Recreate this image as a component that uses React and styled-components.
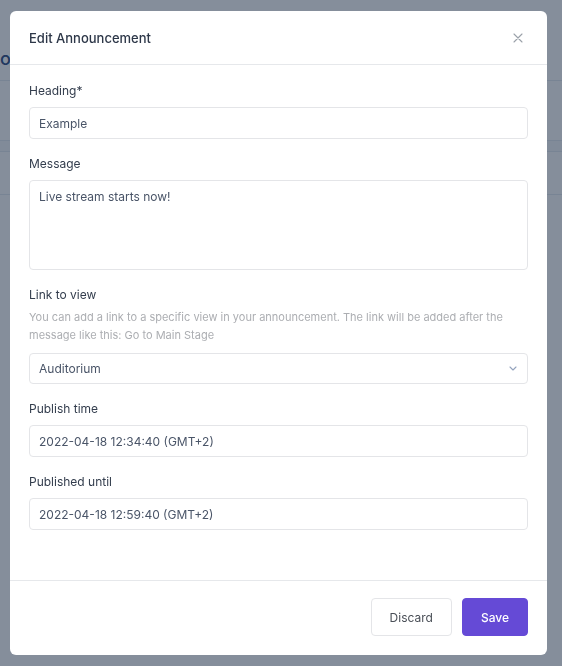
import React from "react";
import styled, { createGlobalStyle } from "styled-components";

const GlobalStyle = createGlobalStyle`
  html, body {
    margin: 0;
    padding: 0;
    background: #ffffff;
    font-family: Inter, "Noto Sans", sans-serif;
    overflow: hidden;
  }
  * {
    box-sizing: border-box;
  }
`;

// page behind the dialog, mostly hidden by the backdrop
const Page = styled.div`
  width: 562px;
  height: 666px;
  background: #ffffff;
`;

const PageHeader = styled.div`
  height: 81px;
  display: flex;
  align-items: flex-end;
  padding-bottom: 11px;
  border-bottom: 1px solid #e2e8f0;
  font-size: 18px;
  font-weight: 500;
  color: #21407a;
  white-space: nowrap;
`;

const PageRow = styled.div`
  height: ${(p) => p.h}px;
  border-bottom: 1px solid #e2e8f0;
  background: ${(p) => (p.shade ? "#f7f9fb" : "#ffffff")};
`;

const Backdrop = styled.div`
  position: fixed;
  inset: 0;
  background: rgba(33, 50, 73, 0.55);
  display: flex;
  align-items: flex-start;
  padding: 11px 15px 11px 10px;
`;

const Dialog = styled.div`
  width: 537px;
  height: 644px;
  background: #ffffff;
  border-radius: 6px;
  display: flex;
  flex-direction: column;
  overflow: hidden;
`;

const Header = styled.div`
  height: 54px;
  flex-shrink: 0;
  display: flex;
  align-items: center;
  justify-content: space-between;
  padding: 0 19px;
  border-bottom: 1px solid #e6e8eb;
`;

const Title = styled.h2`
  margin: 0;
  font-size: 13px;
  font-weight: 500;
  color: #2d3748;
`;

const CloseButton = styled.button`
  width: 20px;
  height: 20px;
  padding: 0;
  border: none;
  background: none;
  display: flex;
  align-items: center;
  justify-content: center;
  cursor: pointer;
`;

const Body = styled.div`
  flex: 1;
  display: flex;
  flex-direction: column;
  gap: 15px;
  padding: 16px 19px 0;
`;

const Field = styled.div`
  display: flex;
  flex-direction: column;
`;

const Label = styled.label`
  font-size: 12px;
  line-height: 20px;
  color: #333d4d;
  margin-bottom: ${(p) => (p.tight ? 3 : 6)}px;
`;

const Help = styled.p`
  margin: 0 0 9px;
  font-size: 11px;
  line-height: 18px;
  color: #acaeb2;
`;

const Input = styled.input`
  height: 32px;
  padding: 0 9px;
  border: 1px solid #e4e5e8;
  border-radius: 4px;
  font-family: inherit;
  font-size: 12px;
  color: #4a5568;
  outline: none;
`;

const TextArea = styled.textarea`
  height: 90px;
  padding: 7px 9px;
  border: 1px solid #e4e5e8;
  border-radius: 4px;
  font-family: inherit;
  font-size: 12px;
  line-height: 18px;
  color: #4a5568;
  resize: none;
  outline: none;
`;

const SelectBox = styled.div`
  height: 31px;
  padding: 0 10px 0 9px;
  border: 1px solid #e4e5e8;
  border-radius: 4px;
  display: flex;
  align-items: center;
  justify-content: space-between;
  font-size: 12px;
  color: #4a5568;
`;

const Footer = styled.div`
  height: 75px;
  flex-shrink: 0;
  display: flex;
  justify-content: flex-end;
  align-items: flex-start;
  gap: 10px;
  padding: 17px 19px 0;
  border-top: 1px solid #e6e8eb;
`;

const Button = styled.button`
  height: 38px;
  padding: 0 18px;
  border-radius: 4px;
  border: 1px solid ${(p) => (p.primary ? "#654ad6" : "#e4e5e8")};
  background: ${(p) => (p.primary ? "#654ad6" : "#ffffff")};
  color: ${(p) => (p.primary ? "#ffffff" : "#4a4f57")};
  font-family: inherit;
  font-size: 12px;
  font-weight: ${(p) => (p.primary ? 500 : 400)};
  cursor: pointer;
`;

const CloseIcon = () => (
  <svg width="10" height="10" viewBox="0 0 10 10">
    <path d="M1 1L9 9M9 1L1 9" stroke="#9ba1a9" strokeWidth="1.1" strokeLinecap="round" />
  </svg>
);

const Chevron = () => (
  <svg width="8" height="5" viewBox="0 0 8 5">
    <path d="M1 1L4 4L7 1" stroke="#94a3bd" strokeWidth="1.1" fill="none" strokeLinecap="round" strokeLinejoin="round" />
  </svg>
);

export default function App() {
  return (
    <>
      <GlobalStyle />
      <Page>
        <PageHeader>ouncements</PageHeader>
        <PageRow h={60} />
        <PageRow h={11} shade />
        <PageRow h={43} />
      </Page>
      <Backdrop>
        <Dialog>
          <Header>
            <Title>Edit Announcement</Title>
            <CloseButton aria-label="Close">
              <CloseIcon />
            </CloseButton>
          </Header>
          <Body>
            <Field>
              <Label>Heading*</Label>
              <Input defaultValue="Example" />
            </Field>
            <Field>
              <Label>Message</Label>
              <TextArea defaultValue="Live stream starts now!" />
            </Field>
            <Field>
              <Label tight>Link to view</Label>
              <Help>
                You can add a link to a specific view in your announcement. The link will be added after the
                message like this: Go to Main Stage
              </Help>
              <SelectBox>
                <span>Auditorium</span>
                <Chevron />
              </SelectBox>
            </Field>
            <Field>
              <Label>Publish time</Label>
              <Input defaultValue="2022-04-18 12:34:40 (GMT+2)" />
            </Field>
            <Field>
              <Label>Published until</Label>
              <Input defaultValue="2022-04-18 12:59:40 (GMT+2)" />
            </Field>
          </Body>
          <Footer>
            <Button>Discard</Button>
            <Button primary>Save</Button>
          </Footer>
        </Dialog>
      </Backdrop>
    </>
  );
}
